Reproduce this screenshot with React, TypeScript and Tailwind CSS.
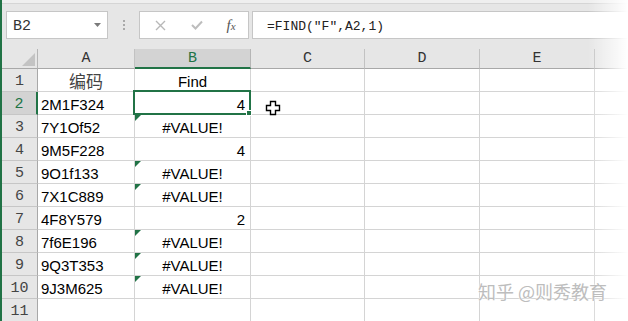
import React from "react";

const GREEN = "#217346";

type Row = { a: string; b: string | number };

const rows: Row[] = [
  { a: "编码", b: "Find" },
  { a: "2M1F324", b: 4 },
  { a: "7Y1Of52", b: "#VALUE!" },
  { a: "9M5F228", b: 4 },
  { a: "9O1f133", b: "#VALUE!" },
  { a: "7X1C889", b: "#VALUE!" },
  { a: "4F8Y579", b: 2 },
  { a: "7f6E196", b: "#VALUE!" },
  { a: "9Q3T353", b: "#VALUE!" },
  { a: "9J3M625", b: "#VALUE!" },
  { a: "", b: "" },
];

const cols = ["A", "B", "C", "D", "E", ""];

function Toolbar() {
  return (
    <div className="h-[49px] bg-[#e6e6e6] flex flex-col">
      <div className="h-[3px] bg-[#efefef]" />
      <div className="h-px bg-[#d5d5d5]" />
      <div className="flex items-start pt-[7px] pl-[4px]">
        {/* Name box */}
        <div className="w-[102px] h-[28px] bg-white border border-[#c6c6c6] flex items-center justify-between pl-[6px] pr-[6px]">
          <span className="text-[15px] text-[#333] font-['Liberation_Mono',monospace] leading-none pt-[2px]">B2</span>
          <svg width="7" height="4" viewBox="0 0 7 4">
            <path d="M0 0 L7 0 L3.5 4 Z" fill="#7a7a7a" />
          </svg>
        </div>
        {/* dots */}
        <div className="w-[31px] h-[28px] flex flex-col items-center justify-center gap-[2px]">
          <div className="w-[2px] h-[2px] bg-[#a9a9a9]" />
          <div className="w-[2px] h-[2px] bg-[#a9a9a9]" />
          <div className="w-[2px] h-[2px] bg-[#a9a9a9]" />
        </div>
        {/* buttons */}
        <div className="w-[110px] h-[28px] bg-white border border-[#c6c6c6] flex items-center">
          <div className="w-[38px] flex justify-center pl-[2px]">
            <svg width="11" height="11" viewBox="0 0 11 11">
              <path d="M1 1 L10 10 M10 1 L1 10" stroke="#b8b8b8" strokeWidth="1.4" />
            </svg>
          </div>
          <div className="w-[38px] flex justify-center">
            <svg width="12" height="10" viewBox="0 0 12 10">
              <path d="M1 5 L4.5 8.5 L11 1.5" stroke="#bdbdbd" strokeWidth="2" fill="none" />
            </svg>
          </div>
          <div className="flex-1 flex justify-center pr-[2px]">
            <span className="font-['Liberation_Serif',serif] italic text-[15px] text-[#555] leading-none">
              f<span className="text-[11px]">x</span>
            </span>
          </div>
        </div>
        {/* formula */}
        <div className="ml-[3px] flex-1 h-[28px] bg-white border border-[#c6c6c6] border-r-0 flex items-center pl-[14px]">
          <span className="text-[13px] text-[#222] font-['Liberation_Mono',monospace] leading-none pt-[2px]">
            =FIND("F",A2,1)
          </span>
        </div>
      </div>
    </div>
  );
}

function HeaderRow() {
  return (
    <>
      <div className="h-[20px] bg-[#e6e6e6] border-r border-b border-r-[#b5b5b5] border-b-[#a8a8a8] relative flex items-end justify-end pr-[2px] pb-[2px]">
        <svg width="13" height="13" viewBox="0 0 13 13">
          <path d="M13 0 L13 13 L0 13 Z" fill="#c3c3c3" />
        </svg>
      </div>
      {cols.map((c, i) =>
        c === "B" ? (
          <div
            key={i}
            className="h-[20px] bg-[#d3d3d3] border-r border-r-[#b5b5b5] border-b-2 border-b-[#217346] flex items-center justify-center text-[15px] text-[#217346] font-['Liberation_Mono',monospace] leading-none"
          >
            {c}
          </div>
        ) : (
          <div
            key={i}
            className="h-[20px] bg-[#e6e6e6] border-r border-r-[#c2c2c2] border-b border-b-[#a8a8a8] flex items-center justify-center text-[15px] text-[#333] font-['Liberation_Mono',monospace] leading-none"
          >
            {c}
          </div>
        )
      )}
    </>
  );
}

function ErrorFlag() {
  return (
    <svg className="absolute left-0 top-0" width="6" height="6" viewBox="0 0 6 6">
      <path d="M0 0 L6 0 L0 6 Z" fill={GREEN} />
    </svg>
  );
}

function DataRow({ row, idx }: { row: Row; idx: number }) {
  const n = idx + 1;
  const selected = n === 2;
  const isErr = row.b === "#VALUE!";
  const isNum = typeof row.b === "number";
  const header = n === 1;
  return (
    <>
      <div
        className={
          selected
            ? "h-[23px] bg-[#d3d3d3] border-r-2 border-r-[#217346] border-b border-b-[#c6c6c6] flex items-center justify-center text-[15px] text-[#217346] font-['Liberation_Mono',monospace] leading-none pt-[2px]"
            : "h-[23px] bg-[#e6e6e6] border-r border-r-[#a8a8a8] border-b border-b-[#c6c6c6] flex items-center justify-center text-[15px] text-[#444] font-['Liberation_Mono',monospace] leading-none pt-[2px]"
        }
      >
        {n}
      </div>
      {/* A */}
      <div
        className={
          header
            ? "h-[23px] border-r border-b border-[#d4d4d4] flex items-center justify-center text-[17px] text-[#444] font-['Noto_Sans_CJK_SC',sans-serif] leading-none"
            : "h-[23px] border-r border-b border-[#d4d4d4] flex items-center pl-[3px] pt-[2px] text-[15px] text-black font-['Liberation_Sans',sans-serif] leading-none"
        }
      >
        {row.a}
      </div>
      {/* B */}
      <div
        className={
          isNum
            ? "relative h-[23px] border-r border-b border-[#d4d4d4] flex items-center justify-end pr-[5px] pt-[2px] text-[15px] text-black font-['Liberation_Sans',sans-serif] leading-none"
            : "relative h-[23px] border-r border-b border-[#d4d4d4] flex items-center justify-center pt-[2px] text-[15px] text-black font-['Liberation_Sans',sans-serif] leading-none"
        }
      >
        {isErr && <ErrorFlag />}
        {row.b}
        {selected && (
          <div className="absolute -left-[2px] -top-[2px] -right-[1px] -bottom-[1px] border-2 border-[#217346] z-10">
            <div className="absolute -right-[3px] -bottom-[3px] w-[6px] h-[6px] bg-[#217346] border border-white" />
          </div>
        )}
      </div>
      {/* C..F */}
      <div className="h-[23px] border-r border-b border-[#d4d4d4]" />
      <div className="h-[23px] border-r border-b border-[#d4d4d4]" />
      <div className="h-[23px] border-r border-b border-[#d4d4d4]" />
      <div className="h-[23px] border-b border-[#d4d4d4]" />
    </>
  );
}

export default function App() {
  return (
    <div className="w-[628px] h-[321px] overflow-hidden relative bg-white border-l-2 border-[#217346]">
      <Toolbar />
      <div className="grid grid-cols-[36px_97px_116px_114px_115px_115px_1fr]">
        <HeaderRow />
        {rows.map((r, i) => (
          <DataRow key={i} row={r} idx={i} />
        ))}
      </div>

      {/* cell cursor */}
      <svg className="absolute left-[263px] top-[100px] z-20" width="16" height="16" viewBox="0 0 16 16">
        <path
          d="M5.5 1.5 H10.5 V5.5 H14.5 V10.5 H10.5 V14.5 H5.5 V10.5 H1.5 V5.5 H5.5 Z"
          fill="white"
          stroke="black"
          strokeWidth="1.4"
        />
      </svg>

      {/* right fade */}
      <div className="absolute right-0 top-0 bottom-0 w-[40px] bg-gradient-to-r from-[#ffffff00] to-white z-20" />

      {/* watermark */}
      <div className="absolute left-[476px] top-[282px] z-30 text-[18px] leading-none text-[#bdbdbd] font-['Noto_Sans_CJK_SC',sans-serif] [text-shadow:0_0_2px_white,0_0_1px_white]">
        知乎 @则秀教育
      </div>
    </div>
  );
}
